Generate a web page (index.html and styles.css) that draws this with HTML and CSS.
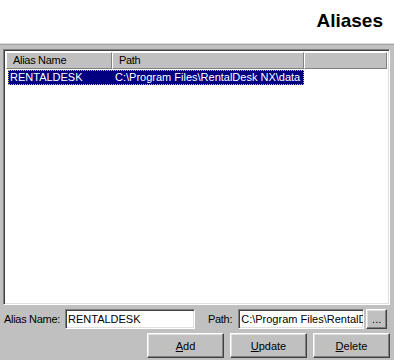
FILE: index.html
```html
<!DOCTYPE html>
<html lang="en">
<head>
    <meta charset="UTF-8">
    <title>Aliases</title>
    <link rel="stylesheet" href="styles.css">
</head>
<body>
    <div class="title">Aliases</div>
    <div class="panel">
        <div class="list">
            <div class="list-head">
                <span>Alias Name</span>
                <span>Path</span>
                <span></span>
            </div>
            <div class="row current">
                <span class="c1">RENTALDESK</span>
                <span class="c2">C:\Program Files\RentalDesk NX\data</span>
            </div>
        </div>
        <div class="fields">
            <label class="lbl">Alias Name:</label>
            <div class="edit name">RENTALDESK</div>
            <label class="lbl path-lbl">Path:</label>
            <div class="edit path">C:\Program Files\RentalDesk NX\data</div>
            <button class="btn browse">...</button>
        </div>
        <div class="actions">
            <button class="btn act"><u>A</u>dd</button>
            <button class="btn act"><u>U</u>pdate</button>
            <button class="btn act"><u>D</u>elete</button>
        </div>
    </div>
</body>
</html>
```

FILE: styles.css
```css
*{
    margin: 0;
    padding: 0;
    box-sizing: border-box;
}
body{
    width: 394px;
    height: 360px;
    overflow: hidden;
    font-family: "Liberation Sans", Arial, sans-serif;
    font-size: 11px;
    color: #000;
    background: #c0c0c0;
}
.title{
    height: 43px;
    background: #fff;
    text-align: right;
    padding: 10px 11px 0 0;
    font-size: 19px;
    font-weight: bold;
    line-height: 22px;
}
.panel{
    height: 317px;
    border-top: 1px solid #dfdfdf;
    box-shadow: inset 0 1px #a0a0a0;
    padding: 5px 4px 0 3px;
}
.list{
    height: 256px;
    background: #fff;
    border: 1px solid;
    border-color: #808080 #fff #fff #808080;
    box-shadow: inset 1px 1px #404040, inset -1px -1px #dfdfdf;
    padding: 2px;
}
.list-head{
    display: grid;
    grid-template-columns: 106px 192px 1fr;
    height: 17px;
    letter-spacing: -0.3px;
}
.list-head span{
    background: #c0c0c0;
    border: 1px solid;
    border-color: #fff #808080 #808080 #fff;
    padding-left: 6px;
    line-height: 15px;
}
.row{
    display: flex;
    width: 296px;
    height: 15px;
    margin: 1px 0 0 2px;
    line-height: 13px;
    white-space: nowrap;
}
.row .c1{
    width: 106px;
    padding-left: 1px;
}
.current{
    background: #000080;
    color: #fff;
    border: 1px dotted #c0c060;
}
.fields{
    display: flex;
    align-items: center;
    height: 20px;
    margin-top: 4px;
    white-space: nowrap;
}
.fields > *{
    flex-shrink: 0;
}
.lbl{
    padding-left: 1px;
    letter-spacing: -0.3px;
}
.path-lbl{
    margin-left: 12px;
}
.edit{
    height: 20px;
    background: #fff;
    border: 1px solid;
    border-color: #808080 #fff #fff #808080;
    box-shadow: inset 1px 1px #404040, inset -1px -1px #dfdfdf;
    padding: 3px 2px 0;
    overflow: hidden;
    line-height: 13px;
}
.name{
    width: 130px;
    margin-left: 5px;
}
.path{
    width: 126px;
    margin-left: 6px;
}
.btn{
    font-family: "Liberation Sans", Arial, sans-serif;
    font-size: 11px;
    color: #000;
    background: #c0c0c0;
    border: 1px solid;
    border-color: #fff #404040 #404040 #fff;
    box-shadow: inset -1px -1px #808080, inset 1px 1px #dfdfdf;
}
.browse{
    width: 21px;
    height: 20px;
    margin-left: 2px;
    padding: 0;
    line-height: 14px;
}
.actions{
    display: flex;
    justify-content: flex-end;
    gap: 6px;
    margin-top: 4px;
}
.act{
    width: 77px;
    height: 25px;
}
```
